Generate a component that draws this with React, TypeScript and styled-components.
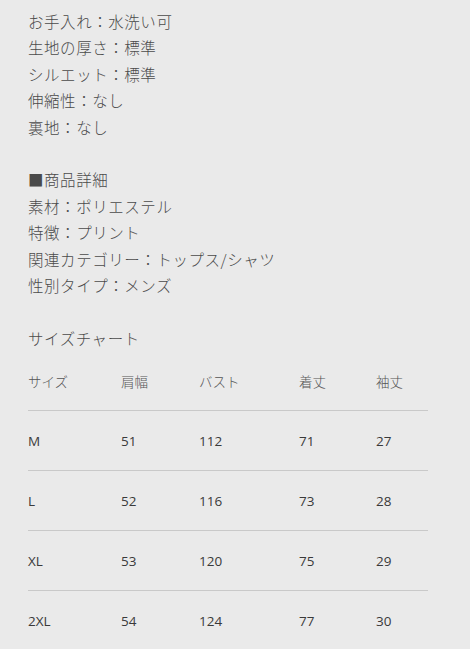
import React from "react";
import styled, { createGlobalStyle } from "styled-components";

const Global = createGlobalStyle`
  html, body { background: #eaeaea; }
  body {
    margin: 8px;
    font-family: "Open Sans", "Noto Sans CJK JP", sans-serif;
    color: #444;
  }
`;

const Wrap = styled.div`
  padding: 0 20px;
`;

const Para = styled.div`
  font-family: "Noto Sans CJK JP", sans-serif;
  font-size: 15.5px;
  font-weight: 300;
  letter-spacing: 0.55px;
  line-height: 26.4px;
  color: #4a4a4a;
`;

const Line = styled.div<{ $gap?: boolean }>`
  margin-top: ${(p) => (p.$gap ? "26.4px" : "0")};
  white-space: nowrap;
`;

const Table = styled.div`
  width: 400px;
  font-size: 13.5px;
`;

const Row = styled.div<{ $head?: boolean; $last?: boolean }>`
  display: grid;
  grid-template-columns: 93px 78px 100px 77px 1fr;
  align-items: center;
  height: 60px;
  box-sizing: border-box;
  border-bottom: ${(p) => (p.$last ? "none" : "1px solid #c9c9c9")};
  font-family: ${(p) =>
    p.$head ? `"Noto Sans CJK JP", sans-serif` : `"Open Sans", "Noto Sans CJK JP", sans-serif`};
  font-weight: ${(p) => (p.$head ? 300 : 400)};
  color: ${(p) => (p.$head ? "#555" : "#3a3a3a")};
`;

const Cell = styled.div``;

const data = [
  ["M", "51", "112", "71", "27"],
  ["L", "52", "116", "73", "28"],
  ["XL", "53", "120", "75", "29"],
  ["2XL", "54", "124", "77", "30"],
];

export default function App() {
  return (
    <>
      <Global />
      <Wrap>
        <Para>
          <Line>お手入れ：水洗い可</Line>
          <Line>生地の厚さ：標準</Line>
          <Line>シルエット：標準</Line>
          <Line>伸縮性：なし</Line>
          <Line>裏地：なし</Line>
          <Line $gap>■商品詳細</Line>
          <Line>素材：ポリエステル</Line>
          <Line>特徴：プリント</Line>
          <Line>関連カテゴリー：トップス/シャツ</Line>
          <Line>性別タイプ：メンズ</Line>
          <Line $gap>サイズチャート</Line>
        </Para>
        <Table>
          <Row $head>
            <Cell>サイズ</Cell>
            <Cell>肩幅</Cell>
            <Cell>バスト</Cell>
            <Cell>着丈</Cell>
            <Cell>袖丈</Cell>
          </Row>
          {data.map((r, i) => (
            <Row key={r[0]} $last={i === data.length - 1}>
              {r.map((c, j) => (
                <Cell key={j}>{c}</Cell>
              ))}
            </Row>
          ))}
        </Table>
      </Wrap>
    </>
  );
}
